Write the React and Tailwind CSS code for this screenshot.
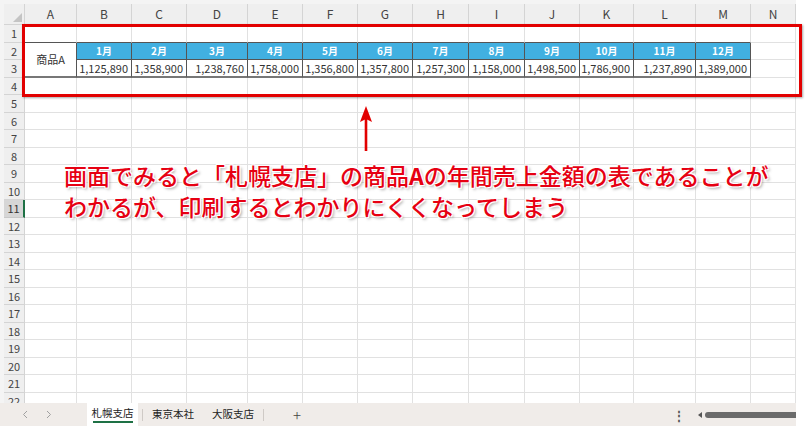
import React from "react";

const COLS = ["A", "B", "C", "D", "E", "F", "G", "H", "I", "J", "K", "L", "M", "N"];
const MONTHS = ["1月", "2月", "3月", "4月", "5月", "6月", "7月", "8月", "9月", "10月", "11月", "12月"];
const VALUES = [
  "1,125,890", "1,358,900", "1,238,760", "1,758,000", "1,356,800", "1,357,800",
  "1,257,300", "1,158,000", "1,498,500", "1,786,900", "1,237,890", "1,389,000",
];

function Grid() {
  const cells = [];
  // header row
  cells.push(
    <div key="corner" className="relative bg-[#efefef] border-r border-b border-[#d4d4d4]">
      <div className="absolute right-[2px] bottom-[2px] w-0 h-0 border-l-[9px] border-l-transparent border-b-[9px] border-b-[#c4c4c4]" />
    </div>
  );
  COLS.forEach((c) => {
    cells.push(
      <div key={"h" + c} className="bg-[#efefef] border-r border-b border-[#d4d4d4] flex items-center justify-center text-[12px] text-[#444]">
        {c}
      </div>
    );
  });

  for (let r = 1; r <= 22; r++) {
    const sel = r === 11;
    cells.push(
      <div
        key={"r" + r}
        className={
          sel
            ? "bg-[#d6d6d6] border-b border-b-[#c8c8c8] border-r-2 border-r-[#1e7145] flex items-center justify-center text-[11px] text-[#333]"
            : "bg-[#efefef] border-r border-b border-[#d4d4d4] flex items-center justify-center text-[11px] text-[#444]"
        }
      >
        {r}
      </div>
    );
    COLS.forEach((c, ci) => {
      const key = c + r;
      const inTable = ci >= 1 && ci <= 12;
      if (r === 1 && (ci <= 12)) {
        cells.push(<div key={key} className="bg-white border-r border-r-[#e1e1e1] border-b border-b-[#555]" />);
      } else if (r === 2 && ci === 0) {
        cells.push(
          <div key={key} className="row-span-2 bg-white border-r border-r-[#555] border-b-2 border-b-[#777] flex items-center justify-center text-[11px] text-[#333]">
            商品A
          </div>
        );
      } else if (r === 3 && ci === 0) {
        // merged
      } else if (r === 2 && inTable) {
        cells.push(
          <div key={key} className="bg-[#41b0e1] border-r border-b border-[#555] flex items-center justify-center text-[10px] font-bold text-white">
            {MONTHS[ci - 1]}
          </div>
        );
      } else if (r === 3 && inTable) {
        cells.push(
          <div key={key} className="bg-white border-r border-r-[#555] border-b-2 border-b-[#777] flex items-center justify-end pr-[3px] text-[11px] text-[#333]">
            {VALUES[ci - 1]}
          </div>
        );
      } else {
        cells.push(<div key={key} className="bg-white border-r border-b border-[#e1e1e1]" />);
      }
    });
  }

  return (
    <div className="grid grid-cols-[21px_52px_55px_55px_61px_55px_55px_55px_56px_56px_55px_54px_62px_55px_45px] grid-rows-[21px_repeat(22,17.5px)]">
      {cells}
    </div>
  );
}

function BottomBar() {
  return (
    <div className="h-[23px] w-[796px] bg-[#f0ece9] flex items-center text-[10.5px] text-[#222]">
      <div className="w-[87px] h-full flex items-center">
        <svg width="6" height="9" viewBox="0 0 6 9" className="ml-[22px]">
          <path d="M5 1 L1.5 4.5 L5 8" fill="none" stroke="#a0a0a0" strokeWidth="1" />
        </svg>
        <svg width="6" height="9" viewBox="0 0 6 9" className="ml-[18px]">
          <path d="M1 1 L4.5 4.5 L1 8" fill="none" stroke="#a0a0a0" strokeWidth="1" />
        </svg>
      </div>
      <div className="w-[51px] h-full bg-white flex flex-col items-center justify-center relative">
        <span className="leading-none mt-[-2px]">札幌支店</span>
        <div className="absolute bottom-[3px] left-[6px] right-[5px] h-[2px] bg-[#1e7145]" />
      </div>
      <div className="ml-[4px] w-px h-[12px] bg-[#cfcac6]" />
      <span className="ml-[9px] leading-none">東京本社</span>
      <span className="ml-[18px] leading-none">大阪支店</span>
      <div className="ml-[9px] w-px h-[12px] bg-[#cfcac6]" />
      <span className="ml-[29px] text-[15px] leading-none text-[#444] font-light">+</span>
      <div className="flex-1" />
      <span className="text-[12px] leading-none text-[#555] font-bold mr-[13px]">⋮</span>
      <svg width="4" height="6" viewBox="0 0 4 6" className="mr-[3px]">
        <path d="M4 0 L0 3 L4 6 Z" fill="#555" />
      </svg>
      <div className="w-[91px] h-[6px] bg-[#6b6b6b] rounded-l-[3px]" />
    </div>
  );
}

export default function App() {
  return (
    <div className="relative w-[812px] h-[426px] bg-white overflow-hidden font-['Noto_Sans_CJK_JP',sans-serif]">
      <div className="w-[796px] h-[426px] flex flex-col">
        <div className="h-[403px] overflow-hidden bg-[#f4f4f4] pt-[4px] pl-[4px]">
          <Grid />
        </div>
        <BottomBar />
      </div>

      {/* red highlight rectangle */}
      <div className="absolute left-[22px] top-[24px] w-[780px] h-[73px] border-[3px] border-[#e20000] [box-shadow:1px_1px_2px_rgba(0,0,0,0.35)]" />

      {/* arrow */}
      <svg className="absolute left-[358px] top-[105px]" width="16" height="47" viewBox="0 0 16 47">
        <rect x="6.7" y="12" width="2.6" height="34" fill="#e20000" />
        <path d="M8 1 L14 17 L8 14 L2 17 Z" fill="#e20000" />
      </svg>

      {/* annotation text */}
      <div className="absolute left-[64px] top-[160px] text-[23px] leading-[31px] text-[#e60012] font-medium whitespace-nowrap [text-shadow:1px_1px_0_#fff,-1px_-1px_0_#fff,1px_-1px_0_#fff,-1px_1px_0_#fff,2px_2px_3px_rgba(0,0,0,0.35)]">
        <div>画面でみると「札幌支店」の商品<b className="font-bold">A</b>の年間売上金額の表であることが</div>
        <div>わかるが、印刷するとわかりにくくなってしまう</div>
      </div>
    </div>
  );
}
